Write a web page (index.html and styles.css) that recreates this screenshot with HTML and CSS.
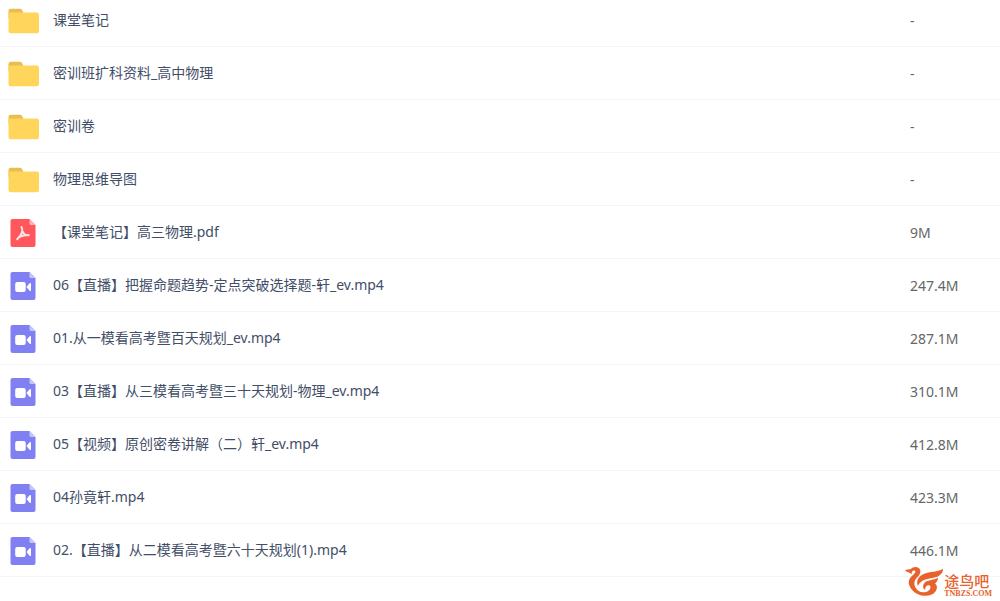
FILE: index.html
```
<!DOCTYPE html>
<html lang="zh-CN">
  <head>
    <meta charset="UTF-8" />
    <title>高中物理</title>
    <link rel="stylesheet" href="styles.css">
  </head>
  <body>
    <svg class="sprite" aria-hidden="true">
      <symbol id="icon-folder" viewBox="0 0 32 26">
        <path fill="#e8bd52" d="M.5 3Q.5.8 2.800.8H12Q13.400.8 14 2L16 6V10H.5Z" />
        <path fill="#ffd65b" d="M.5 4.500H29Q31 4.500 31 6.800V23Q31 25.200 29 25.200H2.700Q.5 25.200.5 23Z" />
      </symbol>
      <symbol id="icon-pdf" viewBox="0 0 26 30">
        <path fill="#ff575b" d="M2.500 1H19.500L25.500 7V27Q25.500 29 23.500 29H2.500Q.5 29 .5 27V3Q.5 1 2.500 1Z" />
        <path fill="#ffb3b5" d="M19.500 1L25.500 7H21Q19.500 7 19.500 5.500Z" />
        <path fill="none" stroke="#ffe3e3" stroke-width="2" stroke-linecap="round" stroke-linejoin="round" d="M11.500 9C13.300 12 12 16.500 7.200 21.300M12.600 13.500C13.600 16 15.500 17.500 18.800 17.200M8.600 19.500C11 17.600 14 17 18.500 16.900" />
      </symbol>
      <symbol id="icon-video" viewBox="0 0 26 30">
        <path fill="#8080f2" d="M2.500 1H19.500L25.500 7V27Q25.500 29 23.500 29H2.500Q.5 29 .5 27V3Q.5 1 2.500 1Z" />
        <path fill="#c5c5fb" d="M19.500 1L25.500 7H21Q19.500 7 19.500 5.500Z" />
        <rect fill="#fff" x="5.200" y="11" width="10.500" height="10" rx="2" />
        <path fill="#fff" d="M16.500 16L19.600 12.300Q21 11.300 21 12.800V19.200Q21 20.700 19.600 19.700Z" />
      </symbol>
    </svg>

    <table class="file-list">
      <tbody>
        <tr>
          <td class="name"><svg class="folder"><use href="#icon-folder" /></svg>课堂笔记</td>
          <td class="size">-</td>
        </tr>
        <tr>
          <td class="name"><svg class="folder"><use href="#icon-folder" /></svg>密训班扩科资料_高中物理</td>
          <td class="size">-</td>
        </tr>
        <tr>
          <td class="name"><svg class="folder"><use href="#icon-folder" /></svg>密训卷</td>
          <td class="size">-</td>
        </tr>
        <tr>
          <td class="name"><svg class="folder"><use href="#icon-folder" /></svg>物理思维导图</td>
          <td class="size">-</td>
        </tr>
        <tr>
          <td class="name"><svg class="file"><use href="#icon-pdf" /></svg>【课堂笔记】高三物理.pdf</td>
          <td class="size">9M</td>
        </tr>
        <tr>
          <td class="name"><svg class="file"><use href="#icon-video" /></svg>06【直播】把握命题趋势-定点突破选择题-轩_ev.mp4</td>
          <td class="size">247.4M</td>
        </tr>
        <tr>
          <td class="name"><svg class="file"><use href="#icon-video" /></svg>01.从一模看高考暨百天规划_ev.mp4</td>
          <td class="size">287.1M</td>
        </tr>
        <tr>
          <td class="name"><svg class="file"><use href="#icon-video" /></svg>03【直播】从三模看高考暨三十天规划-物理_ev.mp4</td>
          <td class="size">310.1M</td>
        </tr>
        <tr>
          <td class="name"><svg class="file"><use href="#icon-video" /></svg>05【视频】原创密卷讲解（二）轩_ev.mp4</td>
          <td class="size">412.8M</td>
        </tr>
        <tr>
          <td class="name"><svg class="file"><use href="#icon-video" /></svg>04孙竟轩.mp4</td>
          <td class="size">423.3M</td>
        </tr>
        <tr>
          <td class="name"><svg class="file"><use href="#icon-video" /></svg>02.【直播】从二模看高考暨六十天规划(1).mp4</td>
          <td class="size">446.1M</td>
        </tr>
      </tbody>
    </table>

    <div class="watermark">
      <svg class="bird" viewBox="0 0 40 32" aria-hidden="true">
        <path fill="#e8622c" d="M1 4.500C3 3 5 3.500 7 3C9 .8 13 .2 15.500 2.800C17.500 5.500 16 9 13 11.500C10 14.500 9.500 18 11.500 21.500C13 24.500 16 26.300 19 26.300C23.500 26.300 26.500 24 26.500 21C26.500 19 24 18.500 22.500 20C21.500 21 21 22.300 21.200 24C18.500 22.500 18.500 19 20.800 16.500C24 13.500 30 14.500 34 11.500C34 14.500 32.500 16.500 31 17.500C33.500 19 33.500 22.500 31.500 25.500C29 29 24.500 30.200 20 29.800C12.500 29.200 7 24.500 5 18.500C4 14.500 6 11.500 9 9C11.300 7 12.300 5.200 10.500 4.600C9 4 7.500 5.500 7.500 8.500C6 6 3 6.500 1 4.500Z" />
        <path fill="#e8622c" d="M13.800 20C11.500 12.500 16.500 8.800 22.500 7C28.500 5.300 34.500 6 39 2.500C39 8 35 10.800 29.500 11.700C22.500 12.800 16.500 14 13.800 20Z" />
      </svg>
      <div class="site">
        <span class="site-name">途鸟吧</span>
        <span class="site-url">TNBZS.COM</span>
      </div>
    </div>
  </body>
</html>
```
FILE: styles.css
```
body {
  font-family: "Noto Sans", "Noto Sans CJK SC", sans-serif;
  font-size: 14px;
  margin: 0;
  background: #fff;
  color: #424e67;
  overflow: hidden;
}

.sprite {
  display: none;
}

/* list is scrolled a little under the top edge */
.file-list {
  width: 100%;
  margin-top: -6px;
  border-collapse: separate;
  border-spacing: 0;
  table-layout: fixed;
}

.file-list td {
  height: 50px;
  padding: 2px 0 0;
  line-height: 20px;
  border-bottom: 1px solid #f3f5f8;
  white-space: nowrap;
}

.file-list svg {
  vertical-align: middle;
}

.folder {
  width: 32px;
  height: 26px;
  margin: 0 13px 0 8px;
}

.file {
  width: 26px;
  height: 30px;
  margin: 0 17px 0 10px;
}

.file-list .size {
  width: 90px;
  color: #666;
}

.watermark {
  position: absolute;
  right: 8px;
  bottom: 3px;
  display: flex;
  align-items: flex-end;
  color: #e8622c;
}

.bird {
  width: 40px;
  height: 32px;
}

.site {
  display: flex;
  flex-direction: column;
}

.site-name {
  font-size: 15px;
  font-weight: 500;
  line-height: 18px;
}

.site-url {
  font-family: "Liberation Serif", serif;
  font-size: 8px;
  font-weight: bold;
  line-height: 8px;
}
```
